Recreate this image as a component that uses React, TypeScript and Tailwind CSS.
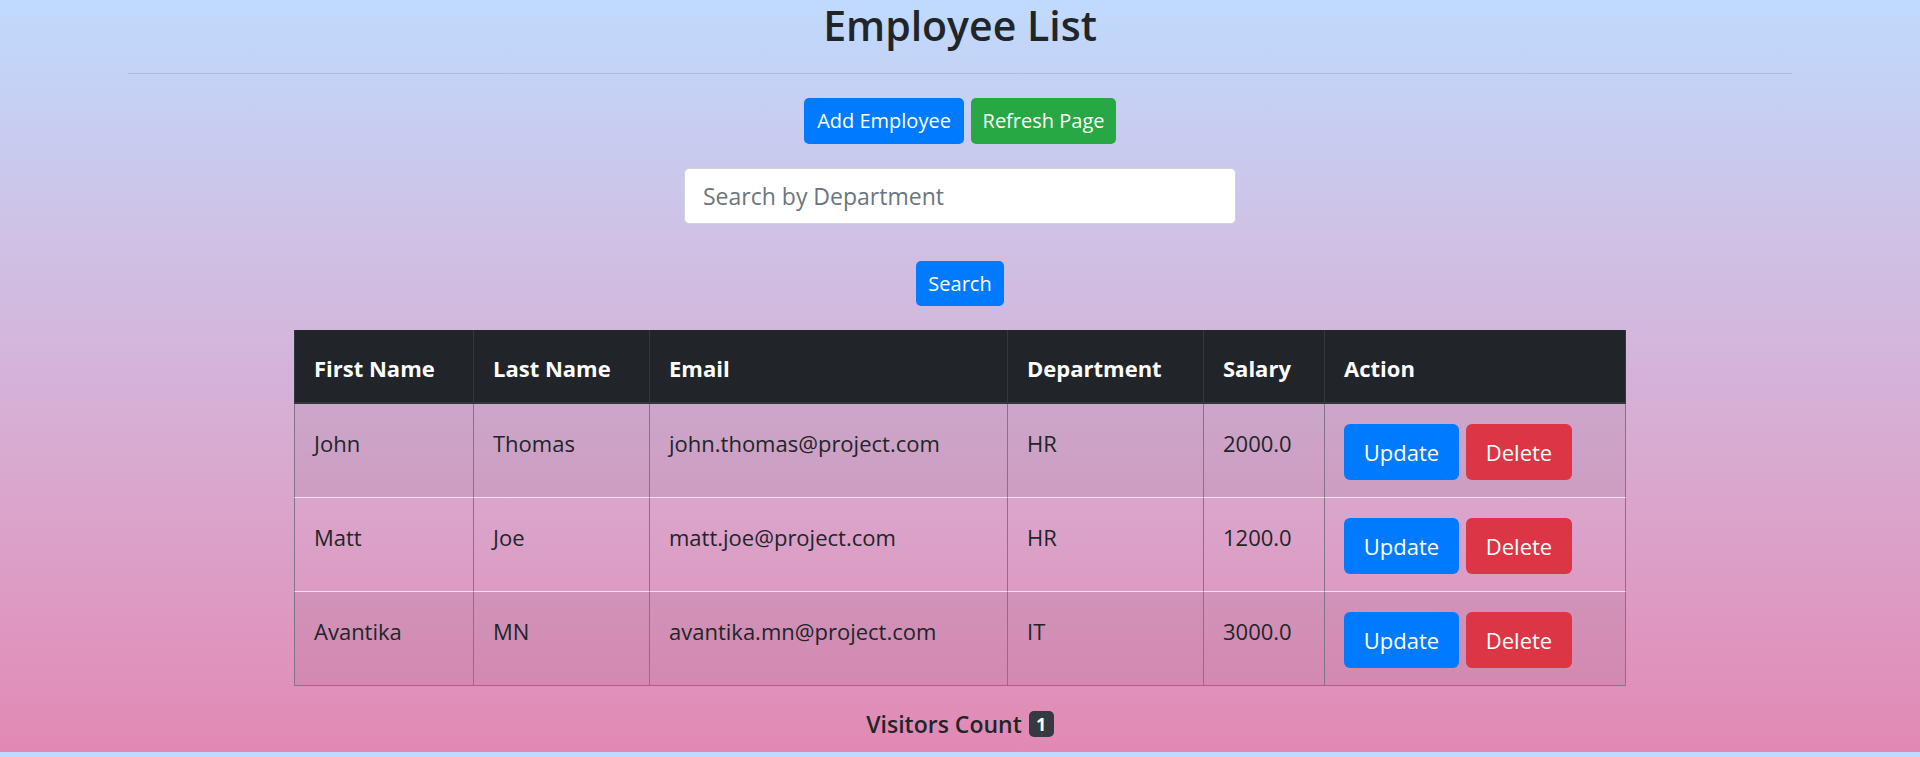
import React from 'react';

interface Employee {
  firstName: string;
  lastName: string;
  email: string;
  department: string;
  salary: string;
}

const employees: Employee[] = [
  { firstName: 'John', lastName: 'Thomas', email: 'john.thomas@project.com', department: 'HR', salary: '2000.0' },
  { firstName: 'Matt', lastName: 'Joe', email: 'matt.joe@project.com', department: 'HR', salary: '1200.0' },
  { firstName: 'Avantika', lastName: 'MN', email: 'avantika.mn@project.com', department: 'IT', salary: '3000.0' },
];

const headers = ['First Name', 'Last Name', 'Email', 'Department', 'Salary', 'Action'];
const widths = ['w-[180px]', 'w-[176px]', 'w-[358px]', 'w-[196px]', 'w-[121px]', 'w-[301px]'];

export default function App() {
  return (
    <div className="min-h-screen bg-[#bfdafd] text-[#212529]" style={{ fontFamily: '"Open Sans", "Noto Sans", sans-serif' }}>
      <div className="h-[752px] bg-linear-to-b from-[#bfdafd] to-[#e189b4]">
        <h1 className="text-center text-[41px] leading-[50px] font-semibold">Employee List</h1>
        <div className="mx-[128px] mt-[23px] h-px bg-black/10" />

        <div className="mt-[24px] flex justify-center gap-[7px]">
          <button className="h-[46px] w-[160px] rounded-[5px] bg-[#007bff] text-[20px] text-white">Add Employee</button>
          <button className="h-[46px] w-[145px] rounded-[5px] bg-[#28a745] text-[20px] text-white">Refresh Page</button>
        </div>

        <div className="mt-[24px] flex justify-center">
          <input
            type="text"
            placeholder="Search by Department"
            className="h-[56px] w-[552px] rounded-[5px] border border-[#ced4da] bg-white px-[18px] text-[23px] placeholder:text-[#6c757d] outline-none"
          />
        </div>

        <div className="mt-[37px] flex justify-center">
          <button className="h-[45px] w-[88px] rounded-[5px] bg-[#007bff] text-[20px] text-white">Search</button>
        </div>

        <table className="mx-auto mt-[24px] w-[1332px] table-fixed border-separate border-spacing-0 text-[22px]">
          <thead>
            <tr className="h-[74px] bg-[#212529] text-white">
              {headers.map((h, i) => (
                <th
                  key={h}
                  className={`${widths[i]} border-b-2 border-r border-[#32383e] px-[19px] pt-[4px] text-left align-middle font-bold ${i === 0 ? 'border-l' : ''}`}
                >
                  {h}
                </th>
              ))}
            </tr>
          </thead>
          <tbody>
            {employees.map((emp, r) => {
              const last = r === employees.length - 1;
              const rowBg = r % 2 === 0 ? 'bg-black/5' : '';
              const cell = `border-r border-r-[#85738a] px-[19px] align-top ${last ? 'border-b border-b-[#85738a]' : 'border-b border-b-white/70'}`;
              return (
                <tr key={emp.email} className={`h-[94px] ${rowBg}`}>
                  <td className={`${cell} border-l border-l-[#85738a] pt-[23px]`}>{emp.firstName}</td>
                  <td className={`${cell} pt-[23px]`}>{emp.lastName}</td>
                  <td className={`${cell} pt-[23px]`}>{emp.email}</td>
                  <td className={`${cell} pt-[23px]`}>{emp.department}</td>
                  <td className={`${cell} pt-[23px]`}>{emp.salary}</td>
                  <td className={`${cell} pt-[20px]`}>
                    <div className="flex gap-[7px]">
                      <button className="h-[56px] w-[115px] rounded-[6px] bg-[#007bff] text-[22px] text-white">Update</button>
                      <button className="h-[56px] w-[106px] rounded-[6px] bg-[#dc3545] text-[22px] text-white">Delete</button>
                    </div>
                  </td>
                </tr>
              );
            })}
          </tbody>
        </table>

        <div className="mt-[23px] flex h-[30px] items-center justify-center gap-[7px]">
          <span className="text-[23px] font-semibold">Visitors Count</span>
          <span className="flex h-[26px] w-[25px] items-center justify-center rounded-[5px] bg-[#343a40] text-[18px] font-bold text-white">1</span>
        </div>
      </div>
    </div>
  );
}
